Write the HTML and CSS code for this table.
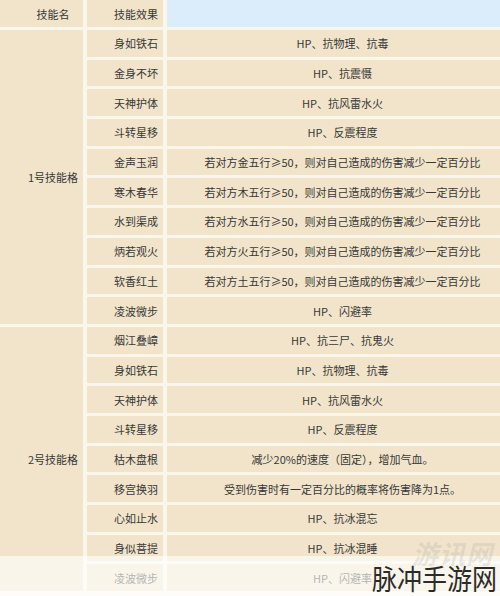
FILE: index.html
```html
<!DOCTYPE html>
<html lang="zh">
<head>
<meta charset="utf-8">
<link rel="stylesheet" href="styles.css">
</head>
<body>
<div class="page">
<table class="skills">
  <tr class="head">
    <td class="c1">技能名</td>
    <td class="c2">技能效果</td>
    <td class="c3 blue"></td>
  </tr>
  <tr><td class="c1" rowspan="10">1号技能格</td><td class="c2">身如铁石</td><td class="c3">HP、抗物理、抗毒</td></tr>
  <tr><td class="c2">金身不坏</td><td class="c3">HP、抗震慑</td></tr>
  <tr><td class="c2">天神护体</td><td class="c3">HP、抗风雷水火</td></tr>
  <tr><td class="c2">斗转星移</td><td class="c3">HP、反震程度</td></tr>
  <tr><td class="c2">金声玉润</td><td class="c3">若对方金五行≥50，则对自己造成的伤害减少一定百分比</td></tr>
  <tr><td class="c2">寒木春华</td><td class="c3">若对方木五行≥50，则对自己造成的伤害减少一定百分比</td></tr>
  <tr><td class="c2">水到渠成</td><td class="c3">若对方水五行≥50，则对自己造成的伤害减少一定百分比</td></tr>
  <tr><td class="c2">炳若观火</td><td class="c3">若对方火五行≥50，则对自己造成的伤害减少一定百分比</td></tr>
  <tr><td class="c2">软香红土</td><td class="c3">若对方土五行≥50，则对自己造成的伤害减少一定百分比</td></tr>
  <tr><td class="c2">凌波微步</td><td class="c3">HP、闪避率</td></tr>
  <tr><td class="c1" rowspan="9">2号技能格</td><td class="c2">烟江叠嶂</td><td class="c3">HP、抗三尸、抗鬼火</td></tr>
  <tr><td class="c2">身如铁石</td><td class="c3">HP、抗物理、抗毒</td></tr>
  <tr><td class="c2">天神护体</td><td class="c3">HP、抗风雷水火</td></tr>
  <tr><td class="c2">斗转星移</td><td class="c3">HP、反震程度</td></tr>
  <tr><td class="c2">枯木盘根</td><td class="c3">减少20%的速度（固定），增加气血。</td></tr>
  <tr><td class="c2">移宫换羽</td><td class="c3">受到伤害时有一定百分比的概率将伤害降为1点。</td></tr>
  <tr><td class="c2">心如止水</td><td class="c3">HP、抗冰混忘</td></tr>
  <tr><td class="c2">身似菩提</td><td class="c3">HP、抗冰混睡</td></tr>
  <tr><td class="c2">凌波微步</td><td class="c3">HP、闪避率</td></tr>
</table>
<div class="fade"></div>
<div class="wm-faint">游讯网</div>
<div class="wm">脉冲手游网</div>
</div>
</body>
</html>
```

FILE: styles.css
```css
html, body {
  margin: 0;
  padding: 0;
  background: #fbf6ec;
}
.page {
  position: relative;
  width: 500px;
  height: 596px;
  overflow: hidden;
  font-family: "Noto Sans CJK SC", "Noto Sans", sans-serif;
  font-size: 11px;
  color: #383838;
}
.skills {
  border-collapse: separate;
  border-spacing: 4px 3px;
  margin: -3px 0 0 -4px;
  width: 508px;
  table-layout: fixed;
}
.skills td {
  background: #f1e4ca;
  height: 26.7px;
  padding: 0;
  line-height: 14px;
  white-space: nowrap;
  vertical-align: middle;
}
.skills tr.head td {
  height: 27px;
}
.c1 {
  width: 83px;
  text-align: center;
  padding-left: 23px !important;
  box-sizing: border-box;
}
.c2 {
  width: 76px;
  text-align: right;
  padding-right: 5px !important;
  box-sizing: border-box;
}
.c3 {
  text-align: center;
  padding-left: 18px !important;
}
.skills td.blue {
  background: #dbedfb;
}
.fade {
  position: absolute;
  left: 0;
  right: 0;
  top: 556px;
  bottom: 0;
  background: rgba(255, 255, 255, 0.62);
}
.wm-faint {
  position: absolute;
  left: 412px;
  top: 540px;
  font-size: 26px;
  font-style: italic;
  font-weight: 700;
  color: rgba(160, 160, 160, 0.22);
  line-height: 1;
  letter-spacing: 1px;
}
.wm {
  position: absolute;
  left: 372px;
  top: 561px;
  font-size: 25px;
  line-height: 1.2;
  color: #2b2b2b;
  white-space: nowrap;
  transform: scaleY(1.12);
  transform-origin: top left;
}
```
